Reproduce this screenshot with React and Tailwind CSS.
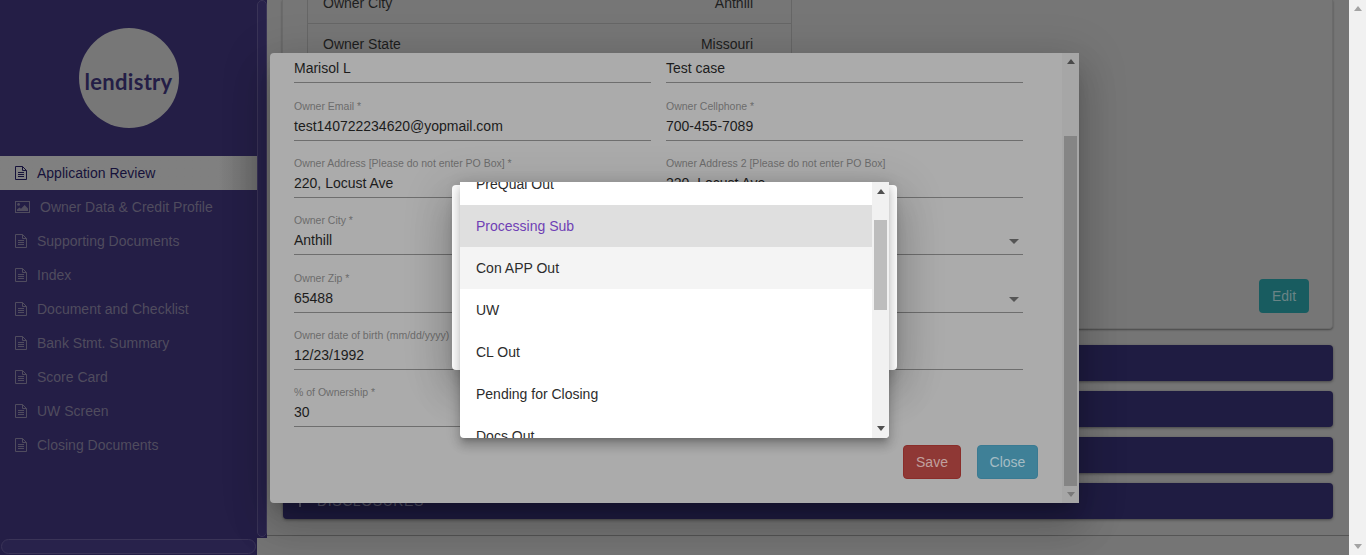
import React from 'react';

const navItems = [
  { label: 'Application Review', active: true },
  { label: 'Owner Data & Credit Profile', image: true },
  { label: 'Supporting Documents' },
  { label: 'Index' },
  { label: 'Document and Checklist' },
  { label: 'Bank Stmt. Summary' },
  { label: 'Score Card' },
  { label: 'UW Screen' },
  { label: 'Closing Documents' },
];

const menuItems = ['PreQual Out', 'Processing Sub', 'Con APP Out', 'UW', 'CL Out', 'Pending for Closing', 'Docs Out'];

function FileIcon({ className }) {
  return (
    <svg viewBox="0 0 12 14" className={className} fill="none" stroke="currentColor" strokeWidth="1">
      <path d="M.5.5h7l4 4v9H.5z" />
      <path d="M7.5.5v4h4M3 6.5h6M3 8.5h6M3 10.5h6" />
    </svg>
  );
}

function ImageIcon({ className }) {
  return (
    <svg viewBox="0 0 15 12" className={className}>
      <path fill="currentColor" fillRule="evenodd" d="M0 0h15v12H0zM1 1v10h13V1z" />
      <circle cx="3.6" cy="3.4" r="1.4" fill="currentColor" />
      <path fill="currentColor" d="M2 10V8.4l2.4-2 1.6 1.3L9.6 4 13 7.4V10z" />
    </svg>
  );
}

function Arrow({ down, className }) {
  return (
    <svg viewBox="0 0 8 5" className={className} fill="currentColor" preserveAspectRatio="none">
      <path d={down ? 'M0 0h8L4 5z' : 'M4 0l4 5H0z'} />
    </svg>
  );
}

function Field({ label, value, select, first }) {
  return (
    <div className={`flex flex-col justify-end border-b border-[#6e6e6e] ${first ? 'h-[30.4px]' : 'h-[57.33px]'}`}>
      {label && <div className="mb-[2px] text-[10.5px] leading-3 text-[#6b6b6b] whitespace-nowrap">{label}</div>}
      <div className="flex h-[26px] items-start justify-between pt-0.5 text-sm leading-5 text-[#1c1c1c]">
        <span>{value}</span>
        {select && <Arrow down className="mt-[9px] mr-[4px] h-[5px] w-[10px] text-[#555555]" />}
      </div>
    </div>
  );
}

export default function App() {
  return (
    <div className="relative h-[555px] w-[1366px] overflow-hidden bg-[#757575] font-['Liberation_Sans',Arial,sans-serif]">
      <div className="flex h-full">
        {/* colonne gauche */}
        <div className="flex w-[267px] flex-col">
          <div className="flex h-[538px]">
            <aside className="w-[257px] bg-[#241e46] pt-[28px]">
              <div className="mx-auto flex h-[100px] w-[100px] items-center justify-center rounded-full bg-[#777777] pt-[8px]">
                <span className="font-['Lato',sans-serif] text-[22px] leading-none font-bold tracking-[0.3px] text-[#241e46]">lendistry</span>
              </div>
              <nav className="mt-[28px]">
                {navItems.map((item) => (
                  <div
                    key={item.label}
                    className={`flex h-[34px] items-center pl-[15px] text-sm ${
                      item.active
                        ? 'bg-gradient-to-r from-[#808080] via-[#808080] via-85% to-[#6c6c6c] text-[#16123a]'
                        : 'text-[#504c5e]'
                    }`}
                  >
                    {item.image ? (
                      <ImageIcon className="mr-[10px] h-[12px] w-[15px]" />
                    ) : (
                      <FileIcon className="mr-[10px] h-[14px] w-[12px]" />
                    )}
                    <span>{item.label}</span>
                  </div>
                ))}
              </nav>
            </aside>
            <div className="w-[10px] bg-[#241e46]">
              <div className="h-[537px] rounded-md border border-[#3a3457] bg-[#28224b]" />
            </div>
          </div>
          <div className="flex h-[17px]">
            <div className="w-[257px] bg-[#241e46] px-px pt-px">
              <div className="h-[15px] rounded-lg border border-[#3a3457] bg-[#28224b]" />
            </div>
          </div>
        </div>

        {/* contenu */}
        <main className="w-[1082px]">
          <div className="flex h-[536px] flex-col gap-[10px] border-b border-[#555555] pr-[16px] pl-[15px]">
            <section className="mb-[6px] flex h-[329px] flex-col overflow-hidden rounded-b border border-t-0 border-[#6b6b6b] bg-[#767676] shadow-[0_1px_2px_rgba(0,0,0,0.4)]">
              <div className="mt-[-17px] ml-[24px] w-[485px] border-x border-[#666666] text-sm text-[#1e1e1e]">
                <div className="flex h-[41px] items-center justify-between border-b border-[#666666] pr-[38px] pl-[15px]">
                  <span>Owner City</span>
                  <span>Anthill</span>
                </div>
                <div className="flex h-[40px] items-center justify-between pr-[38px] pl-[15px]">
                  <span>Owner State</span>
                  <span>Missouri</span>
                </div>
              </div>
              <button className="mt-auto mr-[23px] mb-[15px] h-[34px] w-[50px] self-end rounded bg-[#185c60] text-sm text-[#6a8486]">
                Edit
              </button>
            </section>
            <div className="ml-px h-[36px] rounded bg-[#1f1c42] shadow-[0_1px_3px_rgba(0,0,0,0.4)]" />
            <div className="ml-px h-[36px] rounded bg-[#1f1c42] shadow-[0_1px_3px_rgba(0,0,0,0.4)]" />
            <div className="ml-px h-[36px] rounded bg-[#1f1c42] shadow-[0_1px_3px_rgba(0,0,0,0.4)]" />
            <div className="ml-px flex h-[36px] items-center rounded bg-[#1f1c42] pl-[11px] text-sm tracking-[0.6px] text-[#5c5a70] shadow-[0_1px_3px_rgba(0,0,0,0.4)]">
              <svg viewBox="0 0 12 12" className="mr-[11px] h-3 w-3" fill="currentColor">
                <path d="M5 0h2v5h5v2H7v5H5V7H0V5h5z" />
              </svg>
              <span>DISCLOSURES</span>
            </div>
          </div>
        </main>

        {/* barre de défilement de la page */}
        <div className="flex w-[17px] flex-col items-center justify-between bg-[#f1f1f1] py-[6px] text-[#a3a3a3]">
          <Arrow className="h-[5px] w-[8px]" />
          <Arrow down className="h-[5px] w-[8px]" />
        </div>
      </div>

      {/* modal */}
      <div className="absolute top-[53px] left-[270px] flex h-[450px] w-[809px] rounded-l bg-[#ababab] shadow-[0_11px_15px_-7px_rgba(0,0,0,0.2),0_24px_38px_3px_rgba(0,0,0,0.14),0_9px_46px_8px_rgba(0,0,0,0.12)]">
        <div className="w-[792px] overflow-hidden pr-[24px] pl-[24px]">
          <div className="grid grid-cols-[357px_357px] gap-x-[15px]">
            <Field first value="Marisol L" />
            <Field first value="Test case" />
            <Field label="Owner Email *" value="test140722234620@yopmail.com" />
            <Field label="Owner Cellphone *" value="700-455-7089" />
            <Field label="Owner Address [Please do not enter PO Box] *" value="220, Locust Ave" />
            <Field label="Owner Address 2 [Please do not enter PO Box]" value="220, Locust Ave" />
            <Field label="Owner City *" value="Anthill" />
            <Field select />
            <Field label="Owner Zip *" value="65488" />
            <Field select />
            <Field label="Owner date of birth (mm/dd/yyyy)" value="12/23/1992" />
            <Field />
            <Field label="% of Ownership *" value="30" />
          </div>
          <div className="mt-[18px] flex justify-end gap-4">
            <button className="h-[34px] w-[58px] rounded border border-[#8a2d2a] bg-[#8f3835] text-sm text-[#c0a09e]">Save</button>
            <button className="h-[34px] w-[61px] rounded border border-[#3a7a92] bg-[#3f8097] text-sm text-[#a5bcc4]">Close</button>
          </div>
        </div>
        <div className="flex w-[17px] flex-col items-center bg-[#a6a6a6] pt-[6px] text-[#4a4a4a]">
          <Arrow className="h-[5px] w-[8px]" />
          <div className="mt-[72px] h-[350px] w-[13px] bg-[#858585]" />
          <Arrow down className="mt-[6px] h-[5px] w-[8px] text-[#7a7a7a]" />
        </div>
      </div>

      {/* dialogue de statut */}
      <div className="absolute top-[185px] left-[452px] h-[185px] w-[445px] rounded bg-white shadow-[0_11px_15px_-7px_rgba(0,0,0,0.2),0_24px_38px_3px_rgba(0,0,0,0.14),0_9px_46px_8px_rgba(0,0,0,0.12)]" />

      {/* menu */}
      <div className="absolute top-[182px] left-[460px] flex h-[256px] w-[429px] overflow-hidden rounded-b bg-white shadow-[0_5px_5px_-3px_rgba(0,0,0,0.2),0_8px_10px_1px_rgba(0,0,0,0.14),0_3px_14px_2px_rgba(0,0,0,0.12)]">
        <ul className="mt-[-19px] w-[412px] text-sm text-[#2c2c2c]">
          {menuItems.map((item) => (
            <li
              key={item}
              className={`flex h-[42px] items-center px-4 ${
                item === 'Processing Sub'
                  ? 'bg-[#dfdfdf] text-[#6f3fb5]'
                  : item === 'Con APP Out'
                    ? 'bg-[#f4f4f4]'
                    : ''
              }`}
            >
              {item}
            </li>
          ))}
        </ul>
        <div className="flex w-[17px] flex-col items-center bg-[#f1f1f1] pt-[7px] text-[#505050]">
          <Arrow className="h-[5px] w-[8px]" />
          <div className="mt-[26px] h-[90px] w-[13px] bg-[#bdbdbd]" />
          <Arrow down className="mt-[116px] h-[5px] w-[8px]" />
        </div>
      </div>
    </div>
  );
}
